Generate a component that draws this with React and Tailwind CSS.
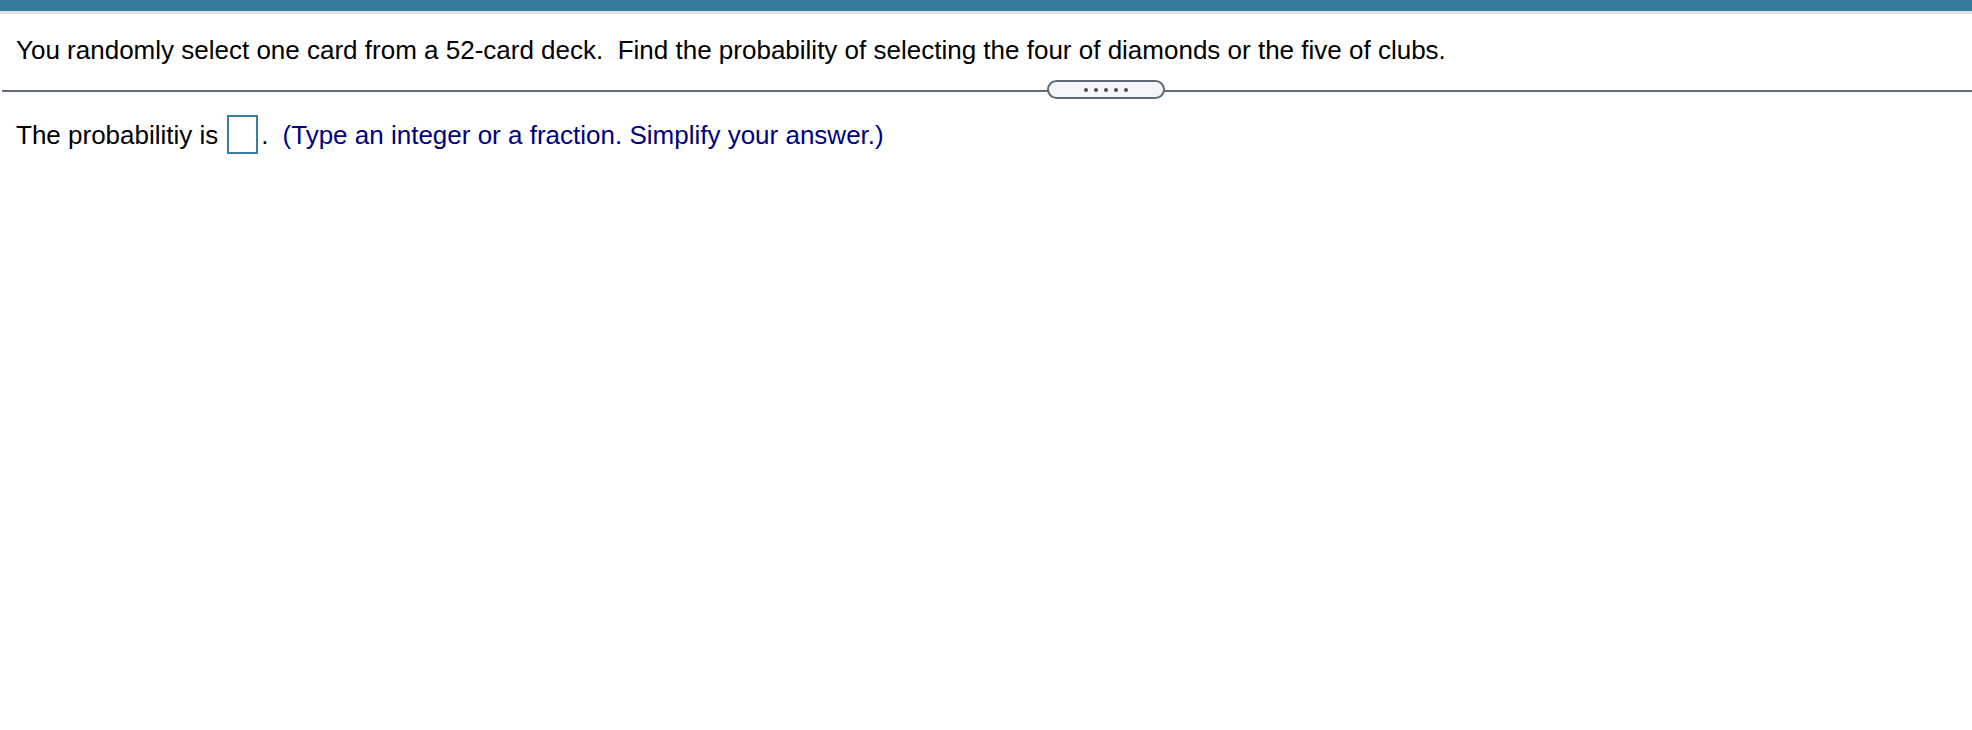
export default function App() {
  return (
    <div className="w-[1972px] h-[730px] bg-white" style={{ fontFamily: '"Liberation Sans", Arial, sans-serif' }}>
      <div className="h-[11px] bg-[#377a9b]" />
      <div className="h-[3px] bg-[#dfe3e8]" />
      <div className="pl-[16px] pt-[21px] text-[26px] leading-[30px] text-black">
        You randomly select one card from a 52-card deck.&nbsp; Find the probability of selecting the four of diamonds or the five of clubs.
      </div>
      <div className="relative mt-[25px] ml-[2px] h-[2px] bg-[#5f6b77]">
        <div className="absolute left-[1045px] top-[-10px] w-[118px] h-[19px] rounded-full border-2 border-[#5f6b77] bg-[#f3f5f8] flex items-center justify-center gap-[6px]">
          {[0, 1, 2, 3, 4].map((i) => (
            <span key={i} className="w-[4px] h-[4px] rounded-full bg-[#4a4f55]" />
          ))}
        </div>
      </div>
      <div className="pl-[16px] pt-[23px] flex items-center text-[26px] leading-[30px]">
        <span className="text-black">The probabilitiy is</span>
        <span className="ml-[9px] w-[31px] h-[39px] border-2 border-[#3b7ea1] bg-white" />
        <span className="ml-[3px] text-black">.</span>
        <span className="ml-[14px] text-[#000080]">(Type an integer or a fraction. Simplify your answer.)</span>
      </div>
    </div>
  );
}
